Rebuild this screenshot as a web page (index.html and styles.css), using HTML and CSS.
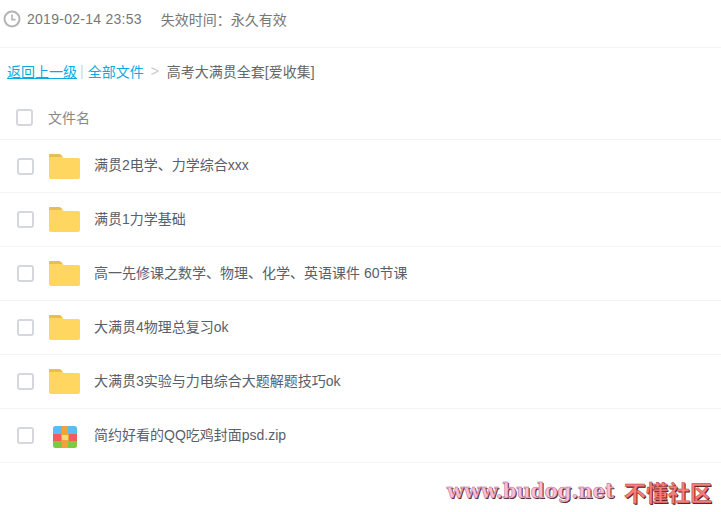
FILE: index.html
```html
<!DOCTYPE html>
<html lang="zh-CN">
<head>
    <meta charset="UTF-8">
    <meta name="viewport" content="width=device-width, initial-scale=1.0">
    <title>高考大满贯全套[爱收集]</title>
    <link rel="stylesheet" href="styles.css">
</head>
<body>
    <!-- Share info -->
    <div class="share-info">
        <svg class="clock" width="18" height="18" viewBox="0 0 18 18" fill="none" stroke="#b4b4b4">
            <circle cx="9" cy="9" r="7.500" stroke-width="2"/>
            <path d="M9 4.500V9.600H12.500" stroke-width="1.600"/>
        </svg>
        <span class="share-date">2019-02-14 23:53</span>
        <span class="share-expire">失效时间<span class="colon">：</span>永久有效</span>
    </div>

    <!-- Breadcrumb -->
    <div class="crumbs">
        <a class="crumb-back" href="#">返回上一级</a>
        <span class="crumb-bar">|</span>
        <a class="crumb-all" href="#">全部文件</a>
        <span class="crumb-arrow">&gt;</span>
        <span class="crumb-current">高考大满贯全套[爱收集]</span>
    </div>

    <!-- File list -->
    <div class="list-head">
        <span class="check"></span>
        <span class="list-title">文件名</span>
    </div>
    <ul class="files">
        <li class="file">
            <span class="check"></span>
            <svg class="folder" width="31" height="25" viewBox="0 0 31 25"><path d="M1 0H10Q12.500 0 13.500 3H0V1Q0 0 1 0Z" fill="#e9bd55"/><path d="M0 3H13.500L15 4H29.500Q31 4 31 5.500V23Q31 25 29 25H2Q0 25 0 23Z" fill="#ffd65f"/></svg>
            <span class="file-name">满贯2电学、力学综合xxx</span>
        </li>
        <li class="file">
            <span class="check"></span>
            <svg class="folder" width="31" height="25" viewBox="0 0 31 25"><path d="M1 0H10Q12.500 0 13.500 3H0V1Q0 0 1 0Z" fill="#e9bd55"/><path d="M0 3H13.500L15 4H29.500Q31 4 31 5.500V23Q31 25 29 25H2Q0 25 0 23Z" fill="#ffd65f"/></svg>
            <span class="file-name">满贯1力学基础</span>
        </li>
        <li class="file">
            <span class="check"></span>
            <svg class="folder" width="31" height="25" viewBox="0 0 31 25"><path d="M1 0H10Q12.500 0 13.500 3H0V1Q0 0 1 0Z" fill="#e9bd55"/><path d="M0 3H13.500L15 4H29.500Q31 4 31 5.500V23Q31 25 29 25H2Q0 25 0 23Z" fill="#ffd65f"/></svg>
            <span class="file-name">高一先修课之数学、物理、化学、英语课件 60节课</span>
        </li>
        <li class="file">
            <span class="check"></span>
            <svg class="folder" width="31" height="25" viewBox="0 0 31 25"><path d="M1 0H10Q12.500 0 13.500 3H0V1Q0 0 1 0Z" fill="#e9bd55"/><path d="M0 3H13.500L15 4H29.500Q31 4 31 5.500V23Q31 25 29 25H2Q0 25 0 23Z" fill="#ffd65f"/></svg>
            <span class="file-name">大满贯4物理总复习ok</span>
        </li>
        <li class="file">
            <span class="check"></span>
            <svg class="folder" width="31" height="25" viewBox="0 0 31 25"><path d="M1 0H10Q12.500 0 13.500 3H0V1Q0 0 1 0Z" fill="#e9bd55"/><path d="M0 3H13.500L15 4H29.500Q31 4 31 5.500V23Q31 25 29 25H2Q0 25 0 23Z" fill="#ffd65f"/></svg>
            <span class="file-name">大满贯3实验与力电综合大题解题技巧ok</span>
        </li>
        <li class="file">
            <span class="check"></span>
            <svg class="zip" width="24" height="22" viewBox="0 0 24 22">
                <clipPath id="zipShape"><rect width="24" height="22" rx="2.500"/></clipPath>
                <g clip-path="url(#zipShape)">
                    <rect width="24" height="8" fill="#5cbdf2"/>
                    <rect y="8" width="24" height="7" fill="#ef5d5d"/>
                    <rect y="15" width="24" height="7" fill="#7fc943"/>
                    <rect x="9" width="6" height="22" fill="#eea33c"/>
                </g>
                <rect x="8.500" y="8.500" width="7" height="6" fill="#f9d77c" stroke="#eea33c"/>
            </svg>
            <span class="file-name">简约好看的QQ吃鸡封面psd.zip</span>
        </li>
    </ul>

    <!-- Watermark -->
    <div class="watermark">
        <span class="mark-url">www.budog.net</span>
        <span class="mark-name">不懂社区</span>
    </div>
</body>
</html>
```

FILE: styles.css
```css
* {
    box-sizing: border-box;
}

html, body {
    height: 100%;
}

body {
    position: relative;
    margin: 0;
    overflow: hidden;
    background-color: #fff;
    color: #666;
    font-family: "Liberation Sans", "Noto Sans CJK SC", sans-serif;
    font-size: 14px;
}

.share-info {
    display: flex;
    align-items: center;
    height: 48px;
    padding: 0 0 10px 3px;
    border-bottom: 1px solid #f4f4f4;
    color: #777;
}

.clock {
    margin-right: 6px;
}

.share-date {
    margin-right: 19px;
    letter-spacing: 0.27px;
}

.colon {
    font-family: "Noto Sans CJK TC", sans-serif;
}

.crumbs {
    display: flex;
    align-items: center;
    height: 48px;
    padding: 0 0 2px 7px;
    color: #666;
}

.crumbs a {
    color: #09aae2;
}

.crumb-all {
    text-decoration: none;
}

.crumb-bar {
    margin: 0 4px 0 3px;
    color: #c4d8e2;
}

.crumb-arrow {
    margin: 0 8px 0 7px;
    color: #c9c9c9;
}

.list-head {
    display: flex;
    align-items: center;
    height: 44px;
    padding-left: 16px;
    border-bottom: 1px solid #f4f4f4;
}

.check {
    flex: none;
    width: 17px;
    height: 17px;
    border: 2px solid #d4d7de;
    border-radius: 3px;
}

.list-title {
    margin-left: 15px;
    padding-bottom: 2px;
    color: #888;
}

.files {
    margin: 0;
    padding: 0;
    list-style: none;
}

.file {
    display: flex;
    align-items: center;
    height: 54px;
    padding-left: 17px;
    border-bottom: 1px solid #f4f4f4;
}

.file:first-child {
    height: 53px;
}

.file .check {
    margin-right: 15px;
}

.folder {
    flex: none;
    margin-right: 14px;
}

.zip {
    flex: none;
    margin: 3px 17px 0 4px;
}

.file-name {
    padding-bottom: 4px;
    color: #58606b;
}

.watermark {
    position: absolute;
    right: 9px;
    top: 480px;
    display: flex;
    align-items: center;
    gap: 10px;
    font-weight: bold;
    line-height: 22px;
}

.mark-url {
    color: #fbbcd4;
    font-family: "DejaVu Serif", serif;
    font-size: 20px;
    letter-spacing: -0.2px;
    -webkit-text-stroke: 0.4px #a0607a;
    text-shadow: 1px 1px 0 #4a2a35;
}

.mark-name {
    color: #fb7d7a;
    font-family: "Noto Sans CJK SC", sans-serif;
    font-size: 22px;
    -webkit-text-stroke: 0.4px #a04040;
    text-shadow: 1px 1px 0 #4a2020;
}
```
